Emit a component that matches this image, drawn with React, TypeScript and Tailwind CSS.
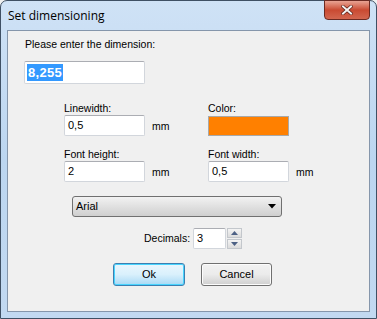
import React from 'react';

const font = { fontFamily: '"Liberation Sans", Arial, sans-serif' };

const TextBox = ({ value, className }: { value: string; className: string }) => (
  <div
    className={`flex items-center bg-white border border-[#d2d6dc] border-t-[#abadb3] rounded-[2px] pl-[3px] text-[11px] text-black ${className}`}
  >
    {value}
  </div>
);

const Field = ({ label, value, unit }: { label: string; value: string; unit?: string }) => (
  <div className="flex flex-col w-[144px]">
    <div className="h-[14px] leading-[14px]">{label}</div>
    <div className="flex items-center">
      <TextBox value={value} className="w-[81px] h-[21px]" />
      {unit && <span className="ml-[7px] mt-[2px]">{unit}</span>}
    </div>
  </div>
);

const App: React.FC = () => {
  return (
    <div className="w-[377px] h-[319px] bg-[#f0f0f0]" style={font}>
      <div className="relative w-[377px] h-[319px] rounded-t-[7px] border border-[#3f5064] bg-gradient-to-b from-[#cfe2f6] via-[#bcd6f0] to-[#c2d9f1] text-[11px] text-black">
        {/* title bar */}
        <div className="flex items-start h-[29px]">
          <span
            className="ml-[7px] mt-[6px] text-[12px] text-black"
            style={{ fontFamily: '"Open Sans", "Noto Sans", sans-serif' }}
          >
            Set dimensioning
          </span>
          <div className="ml-auto mr-[6px] mt-[-1px] flex items-center justify-center w-[46px] h-[20px] rounded-b-[4px] border border-[#6b2a22] bg-gradient-to-b from-[#e8a393] via-[#c94a32] to-[#d2664f]">
            <svg width="12" height="10" viewBox="0 0 12 10">
              <path d="M2 1.5 L10 8.5 M10 1.5 L2 8.5" stroke="#5a1f15" strokeWidth="3.4" strokeLinecap="square" />
              <path d="M2 1.5 L10 8.5 M10 1.5 L2 8.5" stroke="#f4f4f4" strokeWidth="2" strokeLinecap="square" />
            </svg>
          </div>
        </div>

        {/* client area */}
        <div className="ml-[6px] w-[363px] h-[282px] bg-[#f0f0f0] border border-[#8596ab] text-[10.5px]">
          <div className="ml-[17px] mt-[6px] h-[14px] leading-[14px]">Please enter the dimension:</div>
          <div className="ml-[16px] mt-[10px] flex items-center w-[121px] h-[23px] bg-white border border-[#d2d6dc] border-t-[#abadb3] rounded-[2px] pl-[2px]">
            <span className="bg-[#3399ff] text-white text-[13px] leading-[17px] px-[1px] font-bold tracking-[0.3px]">
              8,255
            </span>
          </div>

          <div className="flex ml-[56px] mt-[17px]">
            <Field label="Linewidth:" value="0,5" unit="mm" />
            <div className="flex flex-col">
              <div className="h-[14px] leading-[14px]">Color:</div>
              <div className="mt-[1px] w-[81px] h-[20px] bg-[#ff8000] border border-[#a8a8a8]" />
            </div>
          </div>

          <div className="flex ml-[56px] mt-[11px]">
            <Field label="Font height:" value="2" unit="mm" />
            <Field label="Font width:" value="0,5" unit="mm" />
          </div>

          <div className="ml-[64px] mt-[14px] flex items-center w-[210px] h-[21px] rounded-[3px] border border-[#707070] bg-gradient-to-b from-[#f2f2f2] to-[#cfcfcf] pl-[3px] text-[11px]">
            <span>Arial</span>
            <svg className="ml-auto mr-[5px]" width="8" height="5" viewBox="0 0 8 5">
              <path d="M0 0 H8 L4 4.5 Z" fill="#000" />
            </svg>
          </div>

          <div className="flex items-center ml-[136px] mt-[11px]">
            <span className="mr-[3px]">Decimals:</span>
            <TextBox value="3" className="w-[33px] h-[21px]" />
            <div className="flex flex-col ml-[1px] gap-[1px]">
              <div className="flex items-center justify-center w-[15px] h-[10px] border border-[#c3c7cc] bg-gradient-to-b from-[#f4f4f4] to-[#dcdcdc]">
                <svg width="7" height="4" viewBox="0 0 7 4">
                  <path d="M0 4 L3.5 0 L7 4 Z" fill="#4d6185" />
                </svg>
              </div>
              <div className="flex items-center justify-center w-[15px] h-[10px] border border-[#c3c7cc] bg-gradient-to-b from-[#f4f4f4] to-[#dcdcdc]">
                <svg width="7" height="4" viewBox="0 0 7 4">
                  <path d="M0 0 L7 0 L3.5 4 Z" fill="#4d6185" />
                </svg>
              </div>
            </div>
          </div>

          <div className="flex ml-[105px] mt-[14px] gap-[16px] text-[11px]">
            <button className="flex items-center justify-center w-[72px] h-[23px] rounded-[3px] border border-[#3c7fb1] bg-gradient-to-b from-[#eaf6fd] via-[#d9f0fc] to-[#a7d9f5] shadow-[inset_0_0_0_1px_#48d4fe]">
              Ok
            </button>
            <button className="flex items-center justify-center w-[71px] h-[23px] rounded-[3px] border border-[#707070] bg-gradient-to-b from-[#f2f2f2] via-[#ebebeb] to-[#cfcfcf] shadow-[inset_0_0_0_1px_#fcfcfc]">
              Cancel
            </button>
          </div>
        </div>
      </div>
    </div>
  );
};

export default App;
